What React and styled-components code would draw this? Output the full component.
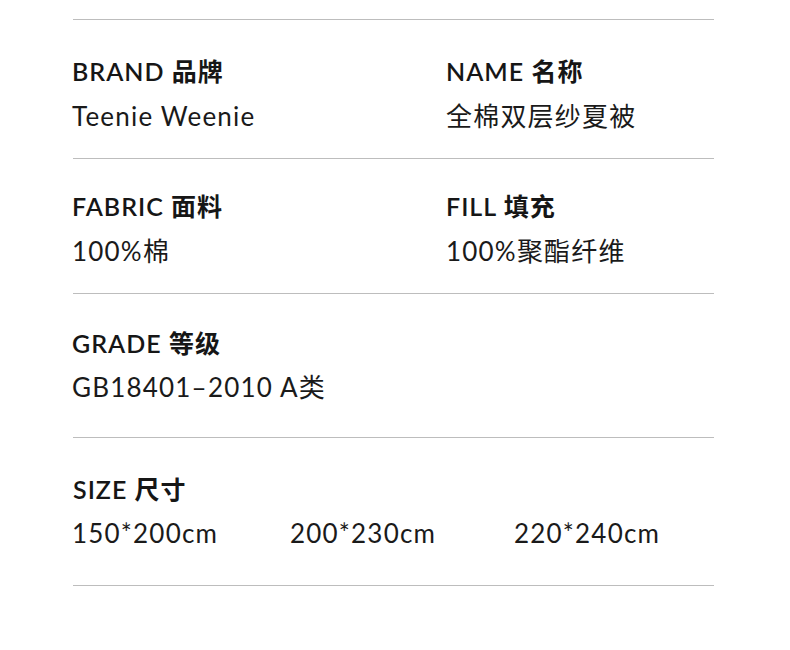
import React from 'react';
import styled, { createGlobalStyle } from 'styled-components';

const GlobalStyle = createGlobalStyle`
  html, body {
    margin: 0;
    padding: 0;
    background: #fff;
  }
  body {
    font-family: Lato, "Noto Sans CJK SC", sans-serif;
    color: #111;
  }
`;

const specs = [
  {
    cols: [
      { label: 'BRAND 品牌', value: 'Teenie Weenie' },
      { label: 'NAME 名称', value: '全棉双层纱夏被' },
    ],
    top: 34,
    gap: 11,
    bottom: 25,
  },
  {
    cols: [
      { label: 'FABRIC 面料', value: '100%棉' },
      { label: 'FILL 填充', value: '100%聚酯纤维' },
    ],
    top: 30,
    gap: 11,
    bottom: 25,
  },
  {
    cols: [{ label: 'GRADE 等级', value: 'GB18401–2010 A类' }],
    top: 32,
    gap: 10,
    bottom: 33,
  },
];

const sizes = ['150*200cm', '200*230cm', '220*240cm'];

const App = () => (
  <Page>
    <GlobalStyle />
    <Sheet>
      {specs.map((row) => (
        <Section key={row.cols[0].label} top={row.top} bottom={row.bottom}>
          <TwoCols>
            {row.cols.map((c) => (
              <Field key={c.label} gap={row.gap}>
                <Label>{c.label}</Label>
                <Value>{c.value}</Value>
              </Field>
            ))}
          </TwoCols>
        </Section>
      ))}
      <Section top={34} bottom={35}>
        <Label>SIZE 尺寸</Label>
        <SizeRow>
          {sizes.map((s) => (
            <Value key={s}>{s}</Value>
          ))}
        </SizeRow>
      </Section>
    </Sheet>
  </Page>
);

export default App;

const Page = styled.div`
  width: 790px;
  height: 650px;
  padding-top: 19px;
  box-sizing: border-box;
`;
const Sheet = styled.div`
  margin: 0 76px 0 73px;
  border-top: 1px solid #bdbdbd;
`;
const Section = styled.div`
  padding: ${({ top }) => top}px 0 ${({ bottom }) => bottom}px;
  border-bottom: 1px solid #bdbdbd;
`;
const TwoCols = styled.div`
  display: grid;
  grid-template-columns: 374px 1fr;
`;
const Field = styled.div`
  display: flex;
  flex-direction: column;
  gap: ${({ gap }) => gap}px;
  margin-left: -1px;
`;
const Label = styled.div`
  font-size: 25px;
  font-weight: 600;
  line-height: 34px;
  letter-spacing: 1px;
  color: #161616;
`;
const Value = styled.div`
  font-size: 26px;
  font-weight: 400;
  line-height: 34px;
  letter-spacing: 1.2px;
  color: #1a1a1a;
`;
const SizeRow = styled.div`
  display: grid;
  grid-template-columns: 218px 224px 1fr;
  margin-top: 10px;
  margin-left: -1px;
`;
